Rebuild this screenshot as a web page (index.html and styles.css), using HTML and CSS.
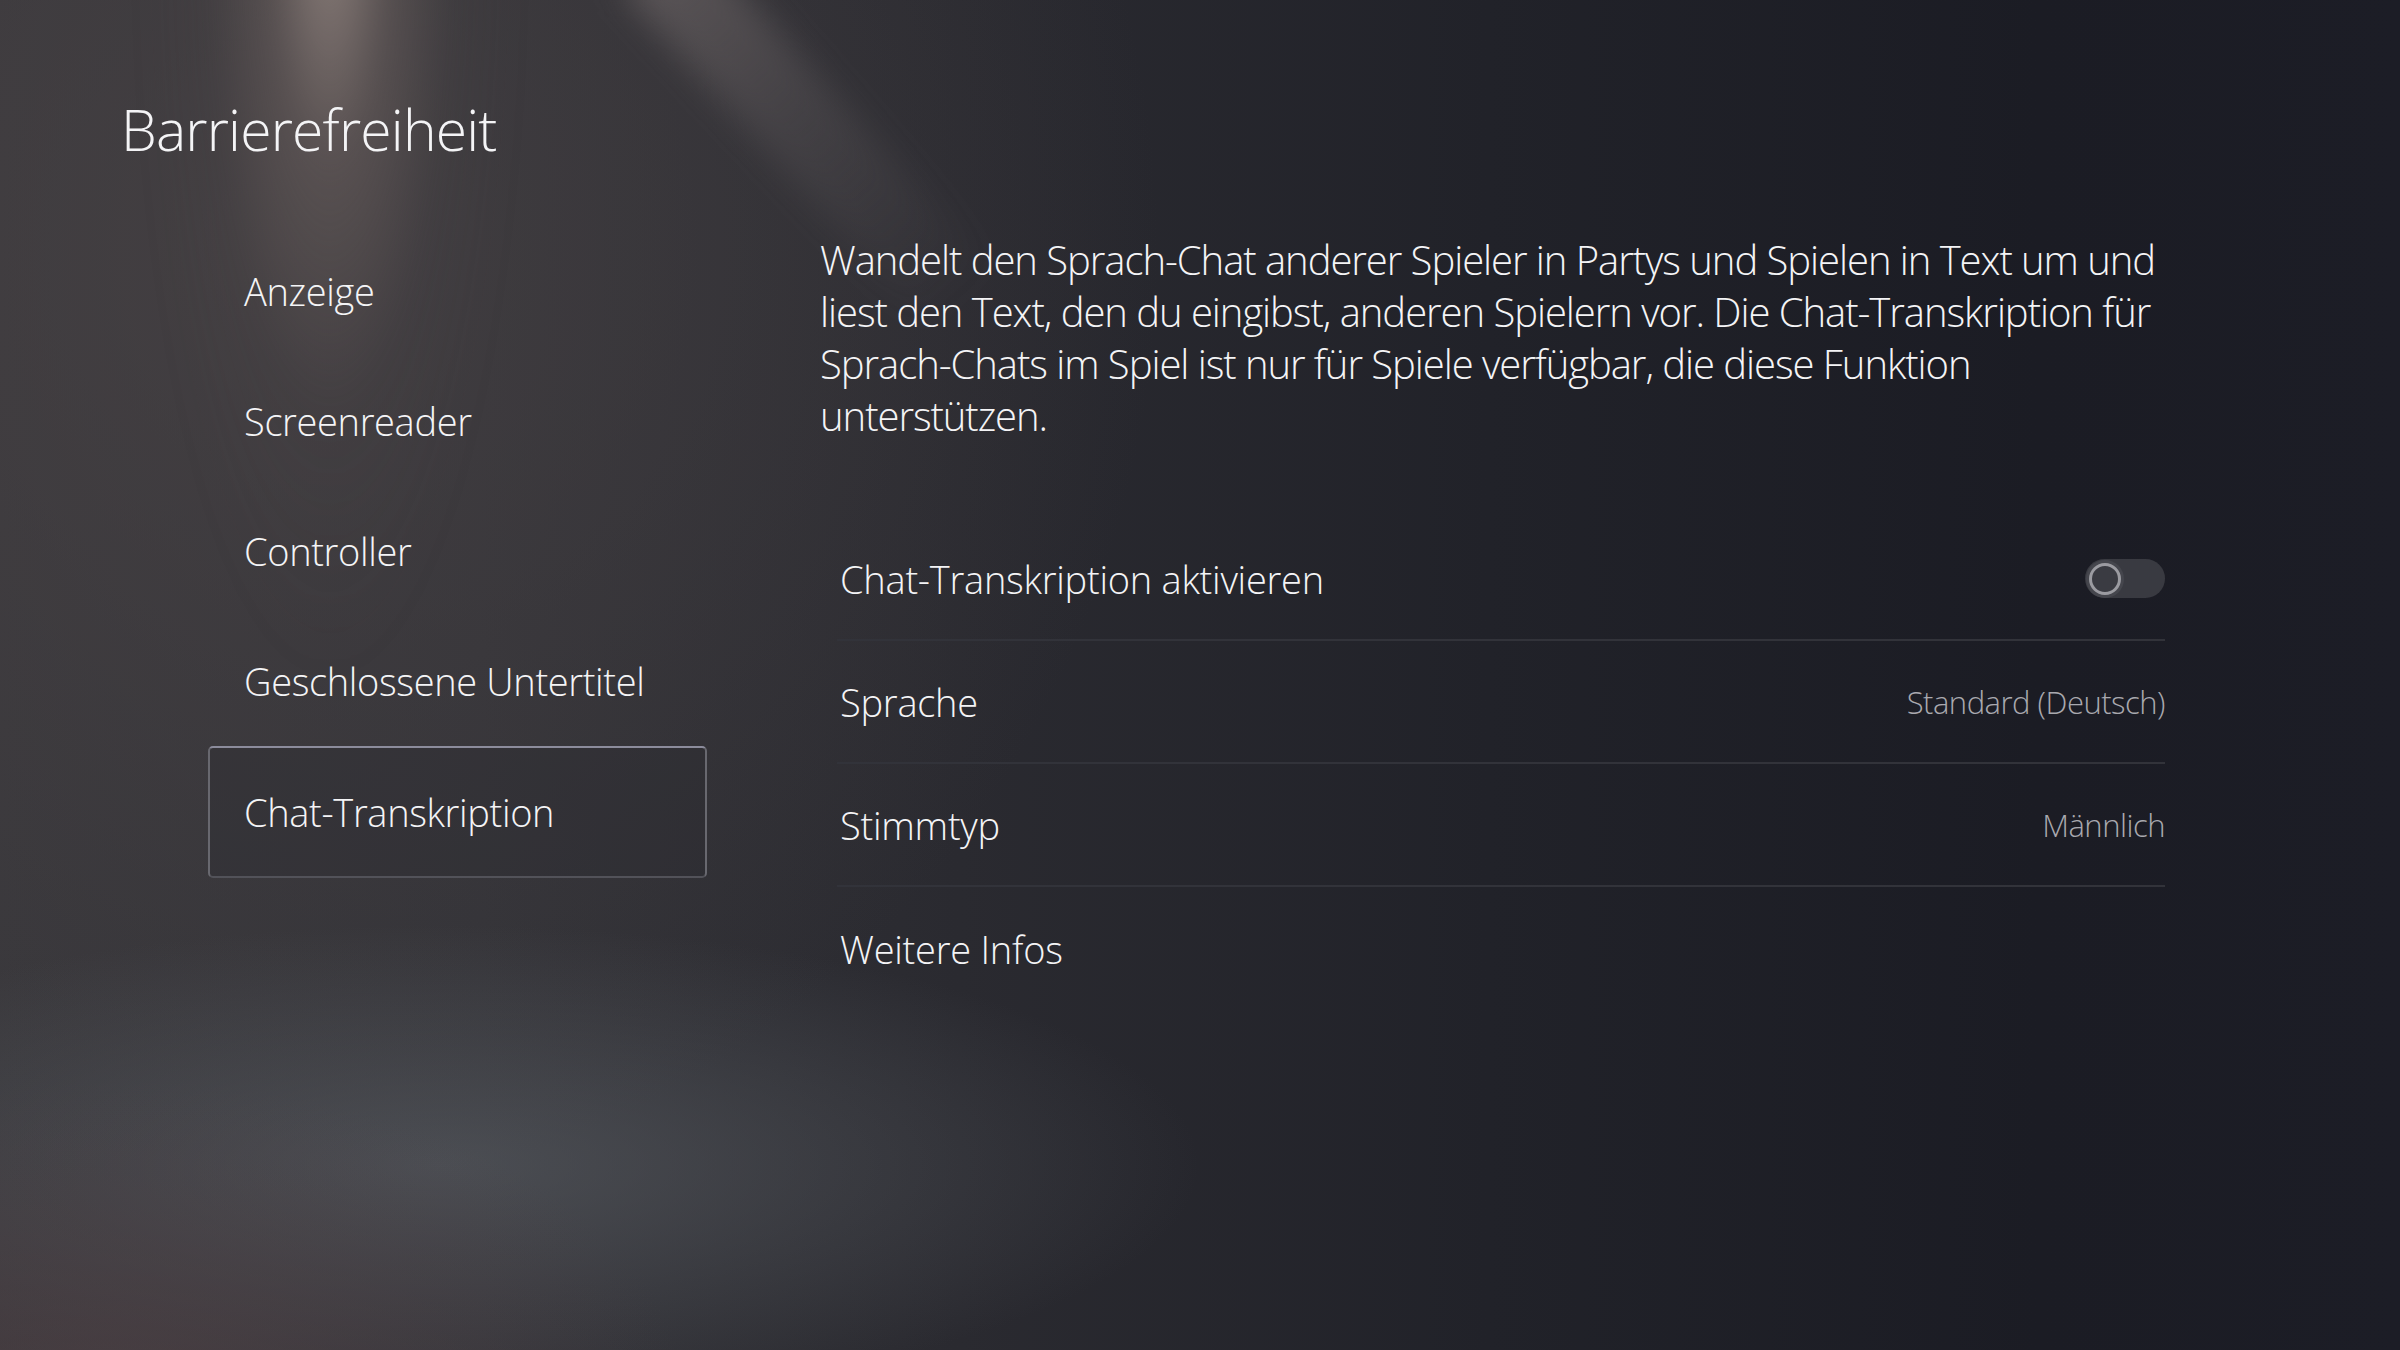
FILE: index.html
```html
<!DOCTYPE html>
<html lang="de">
<head>
<meta charset="utf-8">
<title>Barrierefreiheit</title>
<link rel="stylesheet" href="styles.css">
</head>
<body>
<div class="screen">
  <div class="beam"></div>
  <div class="streak"></div>
  <h1 class="title">Barrierefreiheit</h1>
  <div class="content">
    <nav class="menu">
      <div class="menu-item">Anzeige</div>
      <div class="menu-item">Screenreader</div>
      <div class="menu-item">Controller</div>
      <div class="menu-item">Geschlossene Untertitel</div>
      <div class="menu-item selected">Chat-Transkription</div>
    </nav>
    <section class="detail">
      <p class="desc">Wandelt den Sprach-Chat anderer Spieler in Partys und Spielen in Text um und<br>liest den Text, den du eingibst, anderen Spielern vor. Die Chat-Transkription für<br>Sprach-Chats im Spiel ist nur für Spiele verfügbar, die diese Funktion<br>unterstützen.</p>
      <div class="rows">
        <div class="row">
          <span class="label">Chat-Transkription aktivieren</span>
          <span class="toggle"><span class="knob"></span></span>
        </div>
        <div class="row">
          <span class="label">Sprache</span>
          <span class="value">Standard (Deutsch)</span>
        </div>
        <div class="row">
          <span class="label">Stimmtyp</span>
          <span class="value">Männlich</span>
        </div>
        <div class="row last">
          <span class="label">Weitere Infos</span>
        </div>
      </div>
    </section>
  </div>
</div>
</body>
</html>
```
FILE: styles.css
```css
html, body {
  margin: 0;
  padding: 0;
  background: #1c1d25;
}

.screen {
  position: relative;
  width: 2400px;
  height: 1350px;
  overflow: hidden;
  box-sizing: border-box;
  padding-top: 90px;
  font-family: "Open Sans", "Noto Sans", sans-serif;
  font-weight: 300;
  color: #f4f4f6;
  background:
    radial-gradient(ellipse 560px 300px at 120px 1380px, rgba(80, 64, 68, 0.6), rgba(80, 64, 68, 0) 100%),
    radial-gradient(ellipse 760px 240px at 440px 1165px, rgba(92, 96, 102, 0.6), rgba(92, 96, 102, 0) 100%),
    radial-gradient(ellipse 900px 950px at 260px 250px, rgba(74, 68, 70, 0.65), rgba(74, 68, 70, 0) 100%),
    linear-gradient(90deg, #38373b 0%, #323237 20%, #2a2a30 40%, #212229 62%, #1b1c24 85%, #1c1d26 100%);
}

.beam {
  position: absolute;
  left: 140px;
  top: -80px;
  width: 380px;
  height: 760px;
  background: radial-gradient(ellipse 50% 100% at 50% 0%, rgba(175, 158, 150, 0.7) 0%, rgba(130, 116, 112, 0.36) 32%, rgba(90, 84, 84, 0.1) 65%, rgba(90, 84, 84, 0) 100%);
  filter: blur(12px);
  pointer-events: none;
}

.streak {
  position: absolute;
  left: 610px;
  top: -40px;
  width: 90px;
  height: 460px;
  transform-origin: 50% 0;
  transform: rotate(-42deg);
  background: linear-gradient(180deg, rgba(125, 116, 116, 0.5) 0%, rgba(110, 104, 106, 0.27) 45%, rgba(110, 104, 106, 0) 100%);
  filter: blur(16px);
  pointer-events: none;
}

.title {
  position: relative;
  margin: 0 0 0 121px;
  font-size: 57px;
  line-height: 78px;
  font-weight: 300;
  letter-spacing: -0.8px;
}

.content {
  position: relative;
  display: flex;
  margin-top: 58px;
}

.menu {
  display: flex;
  flex-direction: column;
  margin-left: 208px;
  width: 499px;
  flex: none;
}

.menu-item {
  height: 130px;
  box-sizing: border-box;
  display: flex;
  align-items: center;
  padding-left: 34px;
  border: 2px solid transparent;
  border-radius: 5px;
  font-size: 38px;
  letter-spacing: -0.35px;
  white-space: nowrap;
}

.menu-item.selected {
  height: 132px;
  border-color: #8c8c9c #68686f #525259 #68686f;
  background: rgba(44, 43, 49, 0.35);
}

.detail {
  margin-left: 113px;
  width: 1345px;
  flex: none;
  padding-top: 8px;
}

.desc {
  margin: 0;
  font-size: 40px;
  line-height: 52px;
  letter-spacing: -1.05px;
  white-space: nowrap;
}

.rows {
  margin: 76px 0 0 17px;
  width: 1328px;
}

.row {
  height: 123px;
  box-sizing: border-box;
  display: flex;
  align-items: center;
  justify-content: space-between;
  padding-left: 3px;
  border-bottom: 2px solid #32333a;
  font-size: 38px;
  letter-spacing: -0.25px;
}

.row.last {
  border-bottom: none;
}

.value {
  font-size: 31px;
  letter-spacing: -0.5px;
  color: #a9a9af;
}

.toggle {
  position: relative;
  width: 80px;
  height: 39px;
  border-radius: 20px;
  background: #393a41;
}

.knob {
  position: absolute;
  left: 1px;
  top: 0.5px;
  width: 38px;
  height: 38px;
  border-radius: 50%;
  background: #45464d;
}

.knob::after {
  content: "";
  position: absolute;
  left: 3px;
  top: 3px;
  width: 26px;
  height: 26px;
  border-radius: 50%;
  border: 3px solid #9b9ba1;
  background: #3a3b42;
}
```
